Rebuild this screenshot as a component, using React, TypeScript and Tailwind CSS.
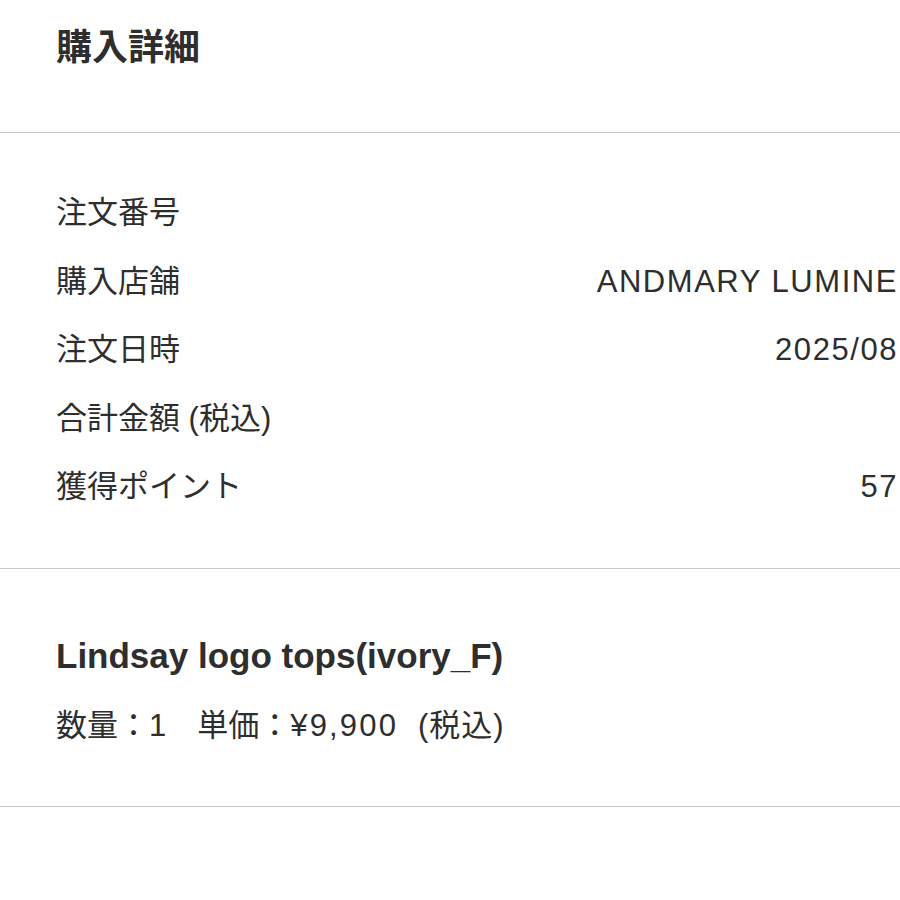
const rows = [
  { label: "注文番号", value: "" },
  { label: "購入店舗", value: "ANDMARY LUMINE" },
  { label: "注文日時", value: "2025/08" },
  { label: "合計金額 (税込)", value: "" },
  { label: "獲得ポイント", value: "57" },
];

const App = () => {
  return (
    <div
      className="w-[900px] h-[900px] overflow-hidden bg-white text-[#2e2e2e]"
      style={{ fontFamily: '"Liberation Sans", "Noto Sans CJK JP", sans-serif' }}
    >
      <header className="h-[132px] px-[56px] pt-[24px]">
        <h1 className="text-[36px] font-bold leading-[48px]">購入詳細</h1>
      </header>

      <section className="border-t border-[#c9c9c9] pt-[46px] pb-[46px] pl-[56px] pr-[2px]">
        {rows.map((row) => (
          <div key={row.label} className="flex items-center justify-between h-[68.5px] text-[31px]">
            <span>{row.label}</span>
            <span className="tracking-[0.05em]">{row.value}</span>
          </div>
        ))}
      </section>

      <section className="border-t border-[#c9c9c9] px-[56px] pt-[63px] h-[238px]">
        <h2 className="text-[35px] font-bold leading-[48px]">Lindsay logo tops(ivory_F)</h2>
        <p className="text-[31px] leading-[48px] mt-[22px]">
          数量：1　単価：<span className="tracking-[0.07em]">¥9,900</span>
          <span className="ml-[20px] tracking-[0.03em]">(税込)</span>
        </p>
      </section>

      <div className="border-t border-[#c9c9c9]" />
    </div>
  );
};

export default App;
